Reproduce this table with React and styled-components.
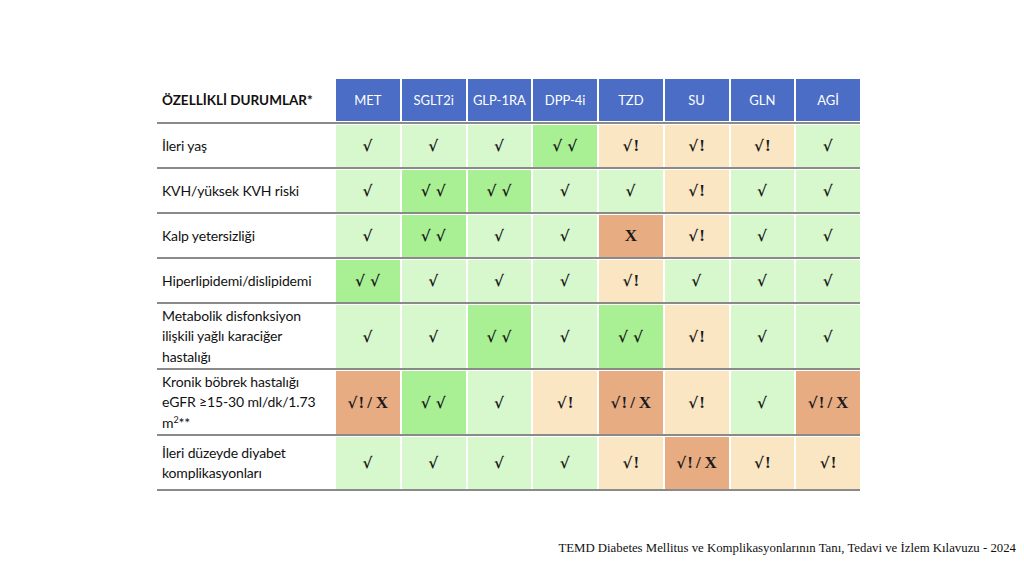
import { createGlobalStyle, styled } from 'styled-components'

const GlobalStyle = createGlobalStyle`
  html, body {
    margin: 0;
    padding: 0;
    background: #fff;
  }
  body {
    width: 1024px;
    height: 574px;
    overflow: hidden;
  }
`;

const COLORS = {
  lg: '#d7f7cd',
  g: '#a9f094',
  p: '#fbe6c4',
  o: '#e8ac83',
};

const drugs = ['MET', 'SGLT2i', 'GLP-1RA', 'DPP-4i', 'TZD', 'SU', 'GLN', 'AGİ'];

const rows = [
  {
    label: ['İleri yaş'], height: 45,
    cells: [['√', 'lg'], ['√', 'lg'], ['√', 'lg'], ['√√', 'g'], ['√!', 'p'], ['√!', 'p'], ['√!', 'p'], ['√', 'lg']],
  },
  {
    label: ['KVH/yüksek KVH riski'], height: 45,
    cells: [['√', 'lg'], ['√√', 'g'], ['√√', 'g'], ['√', 'lg'], ['√', 'lg'], ['√!', 'p'], ['√', 'lg'], ['√', 'lg']],
  },
  {
    label: ['Kalp yetersizliği'], height: 45,
    cells: [['√', 'lg'], ['√√', 'g'], ['√', 'lg'], ['√', 'lg'], ['X', 'o'], ['√!', 'p'], ['√', 'lg'], ['√', 'lg']],
  },
  {
    label: ['Hiperlipidemi/dislipidemi'], height: 45,
    cells: [['√√', 'g'], ['√', 'lg'], ['√', 'lg'], ['√', 'lg'], ['√!', 'p'], ['√', 'lg'], ['√', 'lg'], ['√', 'lg']],
  },
  {
    label: ['Metabolik disfonksiyon', 'ilişkili yağlı karaciğer', 'hastalığı'], height: 66,
    cells: [['√', 'lg'], ['√', 'lg'], ['√√', 'g'], ['√', 'lg'], ['√√', 'g'], ['√!', 'p'], ['√', 'lg'], ['√', 'lg']],
  },
  {
    label: ['Kronik böbrek hastalığı', 'eGFR ≥15-30 ml/dk/1.73', 'm²**'], height: 66,
    cells: [['√!/X', 'o'], ['√√', 'g'], ['√', 'lg'], ['√!', 'p'], ['√!/X', 'o'], ['√!', 'p'], ['√', 'lg'], ['√!/X', 'o']],
  },
  {
    label: ['İleri düzeyde diyabet', 'komplikasyonları'], height: 55,
    cells: [['√', 'lg'], ['√', 'lg'], ['√', 'lg'], ['√', 'lg'], ['√!', 'p'], ['√!/X', 'o'], ['√!', 'p'], ['√!', 'p']],
  },
];

// render a mark like "√!/X" with the root sign in a heavier face
function Mark({ value }) {
  const parts = value === '√√' ? ['√', ' ', '√'] : value.split('');
  return (
    <>
      {parts.map((ch, i) => {
        if (ch === '√') return <Root key={i}>√</Root>;
        if (ch === '/') return <Slash key={i}>/</Slash>;
        return <span key={i}>{ch}</span>;
      })}
    </>
  );
}

export default function App() {
  return (
    <Page>
      <GlobalStyle />
      <Table>
        <HeaderRow>
          <HeadLabel>ÖZELLİKLİ DURUMLAR*</HeadLabel>
          {drugs.map(d => <HeadCell key={d}>{d}</HeadCell>)}
        </HeaderRow>
        {rows.map((row, i) => (
          <Row key={i} $h={row.height}>
            <Label>
              {row.label.map((line, j) => (
                <span key={j}>
                  {line === 'm²**' ? <>m<sup>2</sup>**</> : line}
                </span>
              ))}
            </Label>
            {row.cells.map(([mark, tone], j) => (
              <Cell key={j} $bg={COLORS[tone]}><Mark value={mark} /></Cell>
            ))}
          </Row>
        ))}
      </Table>
      <Footer>TEMD Diabetes Mellitus ve Komplikasyonlarının Tanı, Tedavi ve İzlem Kılavuzu - 2024</Footer>
    </Page>
  );
}

const Page = styled.main`
  width: 1024px;
  height: 574px;
  box-sizing: border-box;
  padding: 79px 0 0 157px;
  display: flex;
  flex-direction: column;
  position: relative;
`;

const Table = styled.div`
  width: 703px;
  display: flex;
  flex-direction: column;
`;

const HeaderRow = styled.div`
  display: grid;
  grid-template-columns: 177px repeat(8, 1fr);
  column-gap: 2px;
  box-sizing: border-box;
  height: 45px;
  padding-bottom: 1px;
  border-bottom: 2px solid #8a8a8a;
`;

const HeadLabel = styled.div`
  display: flex;
  align-items: center;
  padding-left: 5px;
  font-family: Lato, "Open Sans", sans-serif;
  font-size: 13.5px;
  font-weight: 700;
  color: #111;
`;

const HeadCell = styled.div`
  background: #4b6dc5;
  color: #fff;
  display: flex;
  align-items: center;
  justify-content: center;
  font-family: Lato, "Open Sans", sans-serif;
  font-size: 13px;
`;

const Row = styled.div`
  display: grid;
  grid-template-columns: 177px repeat(8, 1fr);
  column-gap: 2px;
  box-sizing: border-box;
  height: ${p => p.$h}px;
  padding-top: 1px;
  border-bottom: 2px solid #8a8a8a;
`;

const Label = styled.div`
  display: flex;
  flex-direction: column;
  justify-content: center;
  padding-left: 5px;
  font-family: Lato, "Open Sans", sans-serif;
  font-size: 14px;
  letter-spacing: -0.15px;
  line-height: 20.5px;
  color: #111;

  sup {
    font-size: 9px;
    line-height: 0;
    vertical-align: 5px;
  }
`;

const Cell = styled.div`
  background: ${p => p.$bg};
  display: flex;
  align-items: center;
  justify-content: center;
  font-family: "Liberation Serif", "Times New Roman", serif;
  font-weight: 700;
  font-size: 17px;
  color: #1a1a1a;
  white-space: pre;
`;

const Root = styled.span`
  font-family: "DejaVu Serif", "Liberation Serif", serif;
  font-weight: 700;
  font-size: 15px;
  margin-right: 1px;
`;

const Slash = styled.span`
  margin: 0 4px 0 3px;
`;

const Footer = styled.div`
  position: absolute;
  right: 8px;
  top: 541px;
  font-family: "Liberation Serif", "Times New Roman", serif;
  font-size: 12.8px;
  color: #111;
`;
